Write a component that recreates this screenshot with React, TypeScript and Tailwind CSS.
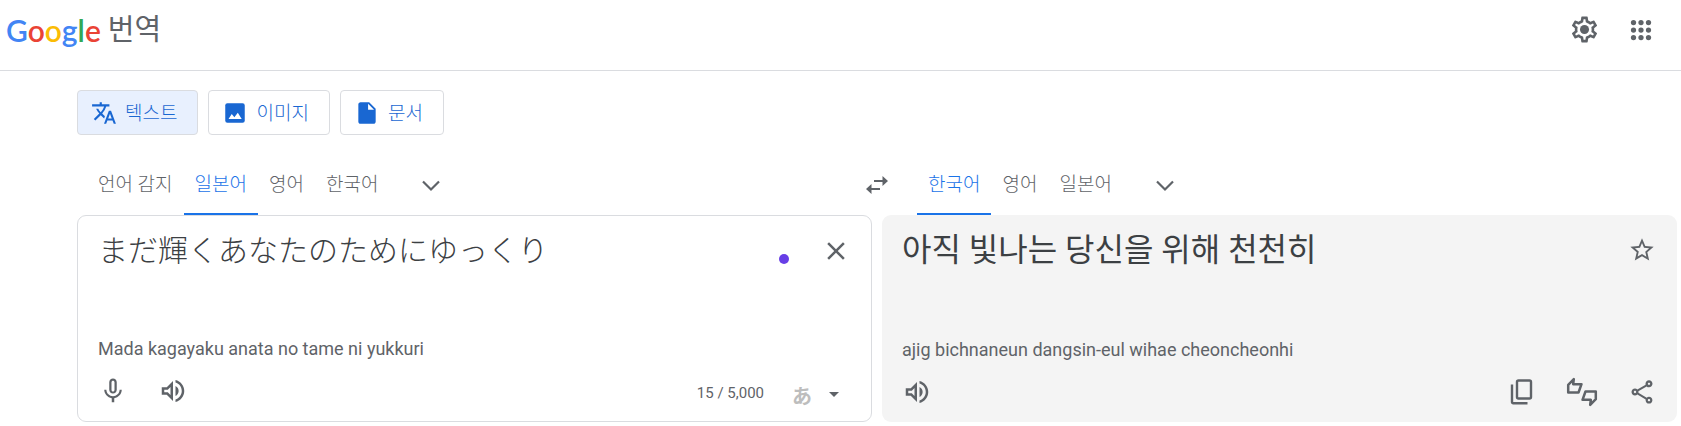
import React from "react";
import {
  MdTranslate,
  MdInsertDriveFile,
  MdMicNone,
  MdOutlineVolumeUp,
  MdStarOutline,
  MdOutlineShare,
  MdClose,
  MdArrowDropDown,
} from "react-icons/md";

function Chevron() {
  return (
    <button type="button" aria-label="언어 더보기" className="mt-1 ml-[26px] flex size-8 items-center justify-center text-[#5f6368]">
      <svg viewBox="0 0 26 26" className="size-[26px]" fill="none" stroke="currentColor" strokeWidth="2.2">
        <path d="M5 9.5l8 8 8-8" />
      </svg>
    </button>
  );
}

function SwapIcon() {
  return (
    <svg viewBox="0 0 26 26" className="size-[26px]" fill="currentColor">
      <path d="M18.5 4v4H10v2h8.500v4l5.500-5zM7.500 12v4H16v2H7.500v4L2 17z" />
    </svg>
  );
}

function ImageIcon({ className }: { className?: string }) {
  return (
    <svg viewBox="0 0 24 24" className={className}>
      <rect x="3" y="3" width="18" height="18" rx="2" fill="currentColor" />
      <path d="M6 17.500l3-4.500 2.400 3 3.200-4.200 3.600 5.700z" fill="#fff" />
    </svg>
  );
}

function SettingsIcon() {
  return (
    <svg viewBox="0 0 24 24" className="size-[31px]" fill="currentColor">
      <path d="M19.430 12.980c.04-.32.070-.64.070-.98s-.03-.66-.07-.98l2.110-1.650c.19-.15.240-.42.120-.64l-2-3.460a.5.5 0 0 0-.61-.22l-2.490 1c-.52-.4-1.080-.73-1.690-.98l-.38-2.650A.488.488 0 0 0 14 2h-4c-.25 0-.46.180-.49.420l-.38 2.650c-.61.250-1.170.590-1.690.980l-2.490-1a.5.5 0 0 0-.61.220l-2 3.460c-.13.220-.07.490.120.640l2.110 1.650c-.04.320-.07.650-.07.980s.03.660.070.980l-2.110 1.650c-.19.150-.24.420-.12.640l2 3.460a.5.5 0 0 0 .61.220l2.490-1c.52.400 1.080.730 1.690.980l.38 2.650c.03.240.240.420.490.420h4c.25 0 .46-.18.490-.42l.38-2.650c.61-.25 1.170-.59 1.690-.98l2.490 1a.5.5 0 0 0 .61-.22l2-3.460c.12-.22.070-.49-.12-.64l-2.110-1.650zm-1.980-1.710c.04.310.050.520.050.730s-.02.430-.05.730l-.14 1.130.89.700 1.080.840-.7 1.210-1.270-.51-1.040-.42-.9.680c-.43.320-.84.560-1.250.730l-1.060.430-.16 1.130-.2 1.350h-1.400l-.19-1.350-.16-1.130-1.060-.43c-.43-.18-.83-.41-1.230-.71l-.91-.7-1.060.430-1.270.510-.7-1.210 1.080-.84.890-.7-.14-1.130c-.03-.31-.05-.54-.05-.74s.02-.43.050-.73l.14-1.130-.89-.7-1.080-.84.700-1.210 1.270.510 1.040.420.900-.68c.43-.32.840-.56 1.250-.73l1.060-.43.160-1.130.200-1.350h1.390l.19 1.350.160 1.130 1.060.430c.43.180.830.410 1.230.710l.91.700 1.060-.43 1.270-.51.700 1.210-1.070.850-.89.700.140 1.130z" />
      <circle cx="12" cy="12" r="3.500" />
    </svg>
  );
}

function AppsIcon() {
  return (
    <svg viewBox="0 0 24 24" className="size-[30px]" fill="currentColor">
      {[6, 12, 18].map((y) => [6, 12, 18].map((x) => <circle key={`${x}-${y}`} cx={x} cy={y} r="2.100" />))}
    </svg>
  );
}

function CopyIcon() {
  return (
    <svg viewBox="0 0 28 28" className="size-7" fill="none" stroke="currentColor" strokeWidth="2.400">
      <rect x="9" y="2.500" width="14" height="18" rx="1.500" />
      <path d="M4 6.500V24a1.200 1.200 0 0 0 1.200 1.200H19.500" />
    </svg>
  );
}

function RateIcon() {
  return (
    <svg viewBox="0 0 32 32" className="size-8" fill="none" stroke="currentColor" strokeWidth="2.500" strokeLinejoin="round">
      <path d="M2.200 16.500V8.800L7.800 3.200 7.200 8.200h8.300l-3 8.300z" />
      <path d="M29.800 15.500v7.700l-5.600 5.600.6-5h-8.300l3-8.300z" />
    </svg>
  );
}

const modes = [
  { label: "텍스트", icon: MdTranslate, active: true },
  { label: "이미지", icon: ImageIcon, active: false },
  { label: "문서", icon: MdInsertDriveFile, active: false },
];

function Tab({ label, active }: { label: string; active?: boolean }) {
  return (
    <button
      type="button"
      role="tab"
      aria-selected={!!active}
      className={
        active
          ? "h-full border-b-2 border-[#1a73e8] px-[11px] pt-[6px] text-[#1a73e8]"
          : "h-full border-b-2 border-transparent px-[11px] pt-[6px] text-[#5f6368]"
      }
    >
      {label}
    </button>
  );
}

export default function App() {
  return (
    <div className="bg-white font-['Roboto','Noto_Sans_CJK_KR',sans-serif] font-light text-[#3c4043]" lang="ko">
      <header className="flex h-[71px] items-start justify-between border-b border-[#dadce0] pr-[25px] pl-[6px]">
        <a href="#" className="flex items-start gap-[7px] pt-[10px]">
          <span className="font-['Lato',sans-serif] text-[30px] leading-10 font-semibold">
            <span className="text-[#4285f4]">G</span>
            <span className="text-[#ea4335]">o</span>
            <span className="text-[#fbbc05]">o</span>
            <span className="text-[#4285f4]">g</span>
            <span className="text-[#34a853]">l</span>
            <span className="text-[#ea4335]">e</span>
          </span>
          <span className="text-[29px] leading-10 font-normal text-[#5f6368]">번역</span>
        </a>
        <div className="flex items-center gap-[26px] pt-[14px] text-[#5f6368]">
          <button type="button" aria-label="설정">
            <SettingsIcon />
          </button>
          <button type="button" aria-label="Google 앱">
            <AppsIcon />
          </button>
        </div>
      </header>

      <main className="pr-1 pl-[77px]">
        <nav className="flex gap-[10px] pt-[19px]">
          {modes.map(({ label, icon: Icon, active }) => (
            <button
              key={label}
              type="button"
              className={
                active
                  ? "flex h-[45px] items-center gap-2 rounded border border-[#dadce0] bg-[#e8f0fe] pr-5 pl-[13px] text-[19px] text-[#1967d2]"
                  : "flex h-[45px] items-center gap-2 rounded border border-[#dadce0] bg-white pr-5 pl-[13px] text-[19px] text-[#1967d2]"
              }
            >
              <Icon className="size-[26px]" />
              <span className="pt-1">{label}</span>
            </button>
          ))}
        </nav>

        <div className="grid h-20 grid-cols-2 items-end gap-[10px] text-[19px]">
          <div className="flex items-end justify-between">
            <div role="tablist" className="flex h-16 items-center pl-[10px]">
              <Tab label="언어 감지" />
              <Tab label="일본어" active />
              <Tab label="영어" />
              <Tab label="한국어" />
              <Chevron />
            </div>
            <button type="button" aria-label="언어 전환" className="-mr-[18px] mb-[17px] text-[#5f6368]">
              <SwapIcon />
            </button>
          </div>
          <div role="tablist" className="flex h-16 items-center pl-[35px]">
            <Tab label="한국어" active />
            <Tab label="영어" />
            <Tab label="일본어" />
            <Chevron />
          </div>
        </div>

        <div className="grid grid-cols-2 gap-[10px]">
          <section className="flex h-[207px] flex-col rounded-[9px] border border-[#dadce0] px-5">
            <div className="flex items-start">
              <p lang="ja" className="flex-1 pt-[10px] font-['Noto_Sans_CJK_JP',sans-serif] text-[30px] leading-[44px]">
                まだ輝くあなたのためにゆっくり
              </p>
              <span className="mt-[38px] mr-8 size-[10px] rounded-full bg-[#673ee6]" />
              <button type="button" aria-label="원본 텍스트 삭제" className="mt-5 text-[#5f6368]">
                <MdClose className="size-[30px]" />
              </button>
            </div>
            <p className="mt-auto text-[18px] leading-6 font-normal text-[#5f6368]">Mada kagayaku anata no tame ni yukkuri</p>
            <div className="my-[10px] flex h-10 items-center text-[#5f6368]">
              <button type="button" aria-label="음성으로 번역" className="mr-[30px]">
                <MdMicNone className="size-[30px]" />
              </button>
              <button type="button" aria-label="원본 텍스트 듣기">
                <MdOutlineVolumeUp className="size-[30px]" />
              </button>
              <span className="mr-7 ml-auto pt-1 text-[15px] font-normal">15 / 5,000</span>
              <button type="button" aria-label="입력 도구" className="mr-[5px] flex items-center gap-[10px] pt-[6px]">
                <span className="pt-1 font-['Noto_Sans_CJK_JP',sans-serif] text-[20px] font-bold text-[#bdbdbd]">あ</span>
                <MdArrowDropDown className="size-6" />
              </button>
            </div>
          </section>

          <section className="flex h-[207px] flex-col rounded-[9px] bg-[#f4f4f4] pr-[21px] pl-5">
            <div className="flex items-start justify-between">
              <p className="pt-[13px] text-[32px] leading-[44px] font-normal">아직 빛나는 당신을 위해 천천히</p>
              <button type="button" aria-label="번역 저장" className="mt-[21px] text-[#5f6368]">
                <MdStarOutline className="size-7" />
              </button>
            </div>
            <p className="mt-auto text-[18px] leading-6 font-normal text-[#5f6368]">
              ajig bichnaneun dangsin-eul wihae cheoncheonhi
            </p>
            <div className="my-[10px] flex h-10 items-center text-[#5f6368]">
              <button type="button" aria-label="번역 듣기" className="mr-auto">
                <MdOutlineVolumeUp className="size-[30px]" />
              </button>
              <button type="button" aria-label="번역 복사" className="mr-[30px]">
                <CopyIcon />
              </button>
              <button type="button" aria-label="번역 평가" className="mr-[30px]">
                <RateIcon />
              </button>
              <button type="button" aria-label="번역 공유">
                <MdOutlineShare className="size-7" />
              </button>
            </div>
          </section>
        </div>
      </main>
    </div>
  );
}
